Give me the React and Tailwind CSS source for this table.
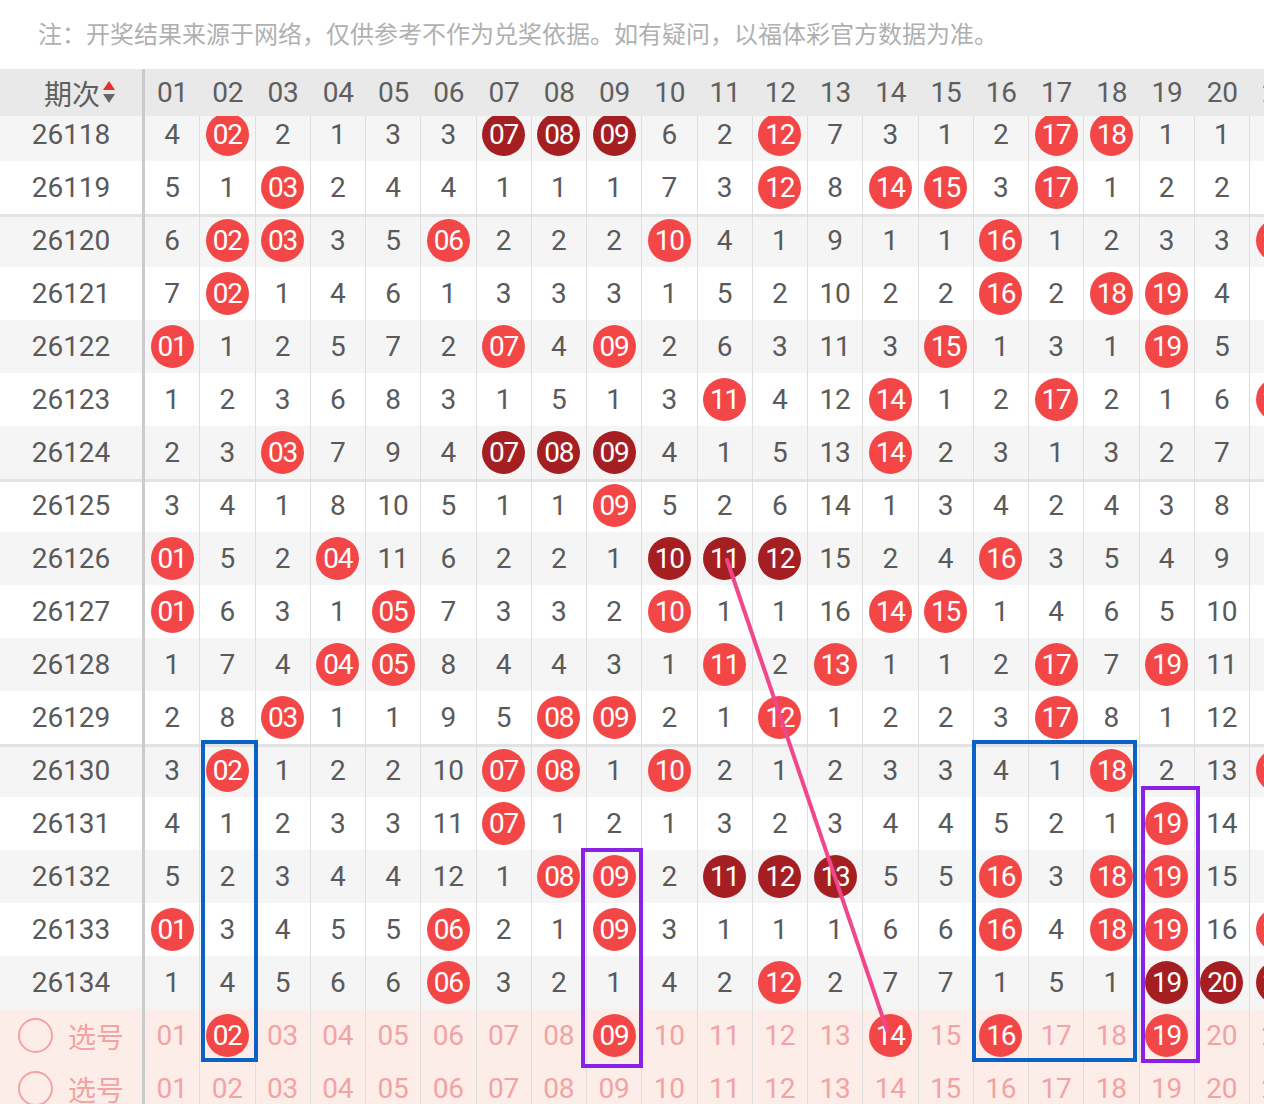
import React from "react";

const DATA = [
  ["26118", "4 B02 2 1 3 3 D07 D08 D09 6 2 B12 7 3 1 2 B17 B18 1 1 1"],
  ["26119", "5 1 B03 2 4 4 1 1 1 7 3 B12 8 B14 B15 3 B17 1 2 2 2"],
  ["26120", "6 B02 B03 3 5 B06 2 2 2 B10 4 1 9 1 1 B16 1 2 3 3 B21"],
  ["26121", "7 B02 1 4 6 1 3 3 3 1 5 2 10 2 2 B16 2 B18 B19 4 1"],
  ["26122", "B01 1 2 5 7 2 B07 4 B09 2 6 3 11 3 B15 1 3 1 B19 5 2"],
  ["26123", "1 2 3 6 8 3 1 5 1 3 B11 4 12 B14 1 2 B17 2 1 6 B21"],
  ["26124", "2 3 B03 7 9 4 D07 D08 D09 4 1 5 13 B14 2 3 1 3 2 7 1"],
  ["26125", "3 4 1 8 10 5 1 1 B09 5 2 6 14 1 3 4 2 4 3 8 2"],
  ["26126", "B01 5 2 B04 11 6 2 2 1 D10 D11 D12 15 2 4 B16 3 5 4 9 3"],
  ["26127", "B01 6 3 1 B05 7 3 3 2 B10 1 1 16 B14 B15 1 4 6 5 10 4"],
  ["26128", "1 7 4 B04 B05 8 4 4 3 1 B11 2 B13 1 1 2 B17 7 B19 11 5"],
  ["26129", "2 8 B03 1 1 9 5 B08 B09 2 1 B12 1 2 2 3 B17 8 1 12 6"],
  ["26130", "3 B02 1 2 2 10 B07 B08 1 B10 2 1 2 3 3 4 1 B18 2 13 B21"],
  ["26131", "4 1 2 3 3 11 B07 1 2 1 3 2 3 4 4 5 2 1 B19 14 1"],
  ["26132", "5 2 3 4 4 12 1 B08 B09 2 D11 D12 D13 5 5 B16 3 B18 B19 15 2"],
  ["26133", "B01 3 4 5 5 B06 2 1 B09 3 1 1 1 6 6 B16 4 B18 B19 16 B21"],
  ["26134", "1 4 5 6 6 B06 3 2 1 4 2 B12 2 7 7 1 5 1 D19 D20 D21"],
];

const NUMS = Array.from({ length: 21 }, (_, i) => String(i + 1).padStart(2, "0"));
const PICK_BALLS = [2, 9, 14, 16, 19];
const SEP_ROWS = ["26120", "26125", "26130"];

function Ball({ n, dark }) {
  return (
    <div
      className={`w-[43px] h-[43px] rounded-full flex items-center justify-center text-white text-[28px] tracking-[-1px] leading-none ${
        dark ? "bg-[#a51f22]" : "bg-[#f34747]"
      }`}
    >
      {n}
    </div>
  );
}

function Cell({ children }) {
  return (
    <div className="w-[55.25px] shrink-0 h-full flex items-center justify-center border-r border-[#dedede]">
      {children}
    </div>
  );
}

function Arrows() {
  return (
    <svg width="14" height="26" viewBox="0 0 14 26" className="ml-[2px]">
      <polygon points="1,10 7,1 13,10" fill="#e8302a" />
      <polygon points="1,14 13,14 7,23" fill="#666666" />
    </svg>
  );
}

function PickCell() {
  return (
    <div className="w-[145px] shrink-0 h-full border-r-[3px] border-[#cbcbcb] flex items-center pl-[18px]">
      <div className="w-[35px] h-[35px] rounded-full border-2 border-[#f2a3a3]" />
      <span className="ml-[15px] text-[28px] text-[#f2a3a3] font-['Noto_Sans_CJK_SC',sans-serif] leading-none">
        选号
      </span>
    </div>
  );
}

export default function App() {
  return (
    <div className="w-[1264px] h-[1104px] overflow-hidden bg-white flex flex-col font-['Roboto','Liberation_Sans',sans-serif]">
      <div className="h-[69px] shrink-0 flex items-center pl-[38px] pb-[3px] text-[24px] text-[#b0b0b0] font-['Noto_Sans_CJK_SC',sans-serif] whitespace-nowrap">
        注：开奖结果来源于网络，仅供参考不作为兑奖依据。如有疑问，以福体彩官方数据为准。
      </div>

      {/* header */}
      <div className="h-[47px] shrink-0 flex bg-[#e9e9e9] relative z-10 text-[28px] text-[#5f5f5f]">
        <div className="w-[145px] shrink-0 h-full border-r-[3px] border-[#cbcbcb] flex items-center justify-center pl-[18px]">
          <span className="font-['Noto_Sans_CJK_SC',sans-serif] leading-none">期次</span>
          <Arrows />
        </div>
        {NUMS.map((n) => (
          <div key={n} className="w-[55.25px] shrink-0 h-full flex items-center justify-center leading-none">
            {n}
          </div>
        ))}
      </div>

      {/* body */}
      <div className="flex-1 overflow-hidden relative">
        <div className="-mt-[8px] relative">
          {DATA.map(([p, s], ri) => {
            const toks = s.split(" ");
            const bg = ri % 2 === 0 ? "bg-[#f5f5f5]" : "bg-white";
            const sep = SEP_ROWS.includes(p) ? "shadow-[inset_0_3px_0_#e2e2e2]" : "";
            return (
              <div key={p} className={`h-[53px] flex text-[28px] text-[#5a5a5a] leading-none ${bg} ${sep}`}>
                <div className="w-[145px] shrink-0 h-full border-r-[3px] border-[#cbcbcb] flex items-center justify-center">
                  {p}
                </div>
                {toks.map((t, ci) => (
                  <Cell key={ci}>
                    {t[0] === "B" ? (
                      <Ball n={t.slice(1)} />
                    ) : t[0] === "D" ? (
                      <Ball n={t.slice(1)} dark />
                    ) : (
                      t
                    )}
                  </Cell>
                ))}
              </div>
            );
          })}

          {[0, 1].map((k) => (
            <div key={k} className="h-[53px] flex text-[28px] text-[#f2a3a3] leading-none bg-[#fdede9]">
              <PickCell />
              {NUMS.map((n, ci) => (
                <Cell key={n}>
                  {k === 0 && PICK_BALLS.includes(ci + 1) ? <Ball n={n} /> : n}
                </Cell>
              ))}
            </div>
          ))}

          {/* overlays */}
          <div className="absolute left-[201px] top-[632px] w-[57px] h-[322px] border-[4px] border-[#0b62c4]" />
          <div className="absolute left-[581px] top-[740px] w-[62px] h-[220px] border-[4px] border-[#8a22e6]" />
          <div className="absolute left-[972px] top-[632px] w-[165px] h-[322px] border-[4px] border-[#0b62c4]" />
          <div className="absolute left-[1141px] top-[678px] w-[59px] h-[277px] border-[4px] border-[#8a22e6]" />
          <svg className="absolute left-0 top-0 pointer-events-none" width="1264" height="1000">
            <line x1="727" y1="452" x2="887" y2="922" stroke="#f0468c" strokeWidth="4" strokeLinecap="round" />
          </svg>
        </div>
      </div>
    </div>
  );
}
